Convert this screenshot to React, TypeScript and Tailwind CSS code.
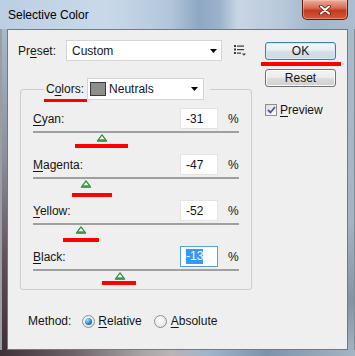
import React from "react";

type Row = { label: string; value: number; focused?: boolean };

const rows: Row[] = [
  { label: "Cyan", value: -31 },
  { label: "Magenta", value: -47 },
  { label: "Yellow", value: -52 },
  { label: "Black", value: -13, focused: true },
];

const TRACK = 201;

// access-key underline, like the Win32 dialog
function Key({ text, at = 0 }: { text: string; at?: number }) {
  return (
    <>
      {text.slice(0, at)}
      <span className="underline underline-offset-[2px]">{text[at]}</span>
      {text.slice(at + 1)}
    </>
  );
}

function Arrow() {
  return (
    <svg width="7" height="4" viewBox="0 0 7 4">
      <path d="M0 0H7L3.5 4Z" fill="#000" />
    </svg>
  );
}

function ListIcon() {
  return (
    <svg width="12" height="11" viewBox="0 0 12 11">
      <g fill="#3a3a3a">
        <rect x="0" y="0" width="2" height="2" />
        <rect x="3" y="0.5" width="7" height="1.2" />
        <rect x="0" y="3.5" width="2" height="2" />
        <rect x="3" y="4" width="7" height="1.2" />
        <rect x="0" y="7" width="2" height="2" />
        <rect x="3" y="7.5" width="4" height="1.2" />
        <path d="M8 8.5H12L10 10.8Z" />
      </g>
    </svg>
  );
}

function Thumb() {
  return (
    <svg width="11" height="8" viewBox="0 0 11 8">
      <path d="M5.5 0.8L10.2 7.2H0.8Z" fill="#f6fbf6" stroke="#2f8a3c" strokeWidth="1.2" strokeLinejoin="round" />
      <rect x="1.6" y="5.2" width="7.8" height="2.3" rx="0.8" fill="#3b9b49" />
    </svg>
  );
}

function Radio({ checked }: { checked?: boolean }) {
  return (
    <span className="flex h-[13px] w-[13px] items-center justify-center rounded-full border border-[#8b8d8f] bg-[radial-gradient(circle_at_40%_35%,#ffffff,#dcdcdc)]">
      {checked && (
        <span className="h-[7px] w-[7px] rounded-full bg-[radial-gradient(circle_at_35%_30%,#a8e4ff,#1b80c8_60%,#0c4a86)]" />
      )}
    </span>
  );
}

function SliderRow({ row }: { row: Row }) {
  const pos = ((row.value + 100) / 200) * TRACK;
  return (
    <div className="flex flex-col">
      <div className="flex h-[21px] items-center">
        <span className="w-[147px]">
          <Key text={row.label} />:
        </span>
        <div
          className={
            row.focused
              ? "flex h-[21px] w-[38px] items-center border border-[#5b9bd8] bg-white pl-[5px]"
              : "flex h-[21px] w-[38px] items-center border border-[#e4e4e4] bg-white pl-[5px]"
          }
        >
          {row.focused ? (
            <span className="bg-[#3399ff] leading-[15px] text-white">{row.value}</span>
          ) : (
            row.value
          )}
        </div>
        <span className="ml-[10px]">%</span>
      </div>
      <div className="mt-[2px] h-[2px] w-full bg-[#9f9f9f]" />
      <div className="relative h-[14px]">
        <div className="absolute top-[1px] -translate-x-1/2" style={{ left: pos }}>
          <Thumb />
        </div>
      </div>
    </div>
  );
}

export default function App() {
  return (
    <div className="relative flex h-[356px] w-[355px] flex-col overflow-hidden font-['Liberation_Sans',Arial,sans-serif] text-[12px] text-[#141414]">
      {/* title bar */}
      <div className="flex h-[29px] shrink-0 items-start justify-between bg-[linear-gradient(90deg,#bccfe2_0%,#c9d9ea_30%,#b2c6db_48%,#8ea7c3_56%,#9cb3cc_62%,#c9d6e4_67%,#b6c8da_80%,#a2b7cd_88%,#aabdd1_100%)]">
        <span className="ml-[8px] mt-[8px] leading-[14px] text-black">Selective Color</span>
        <div className="mr-[7px] flex h-[20px] w-[46px] items-center justify-center rounded-b-[5px] border border-t-0 border-[#5e1e16] bg-[linear-gradient(#eab0a0,#d86a52_42%,#c23a20_55%,#d45a38)] shadow-[inset_0_0_0_1px_rgba(255,200,180,0.45)]">
          <svg width="12" height="10" viewBox="0 0 12 10">
            <path d="M2 1.5L10 8.5M10 1.5L2 8.5" stroke="#6a1a10" strokeWidth="3.6" strokeLinecap="round" />
            <path d="M2 1.5L10 8.5M10 1.5L2 8.5" stroke="#ffffff" strokeWidth="2" strokeLinecap="round" />
          </svg>
        </div>
      </div>

      <div className="flex h-[321px] shrink-0">
        <div className="w-[7px] border-l-[2px] border-[#9b9da2] bg-[linear-gradient(#a7b9cb,#8b909c_40%,#5c4b55_75%,#3e3038)]" />

        {/* client area */}
        <div className="flex w-[341px] border border-[#6b7b8c] bg-[#efefef] pl-[10px] pt-[10px]">
          <div className="flex w-[229px] flex-col">
            <div className="flex h-[21px] items-center">
              <span className="w-[48px]">
                <Key text="Preset" at={2} />:
              </span>
              <div className="flex h-[21px] w-[156px] items-center justify-between border border-[#d4d4d4] bg-white pl-[5px] pr-[4px]">
                <span>Custom</span>
                <Arrow />
              </div>
              <span className="ml-[12px]">
                <ListIcon />
              </span>
            </div>

            <fieldset className="ml-[2px] mt-[17px] w-[227px] rounded-[3px] border border-[#cdcdcd] px-[12px] pb-[4px] pt-[8px]">
              <legend className="ml-[11px] pl-[2px] pr-[6px]">
                <div className="flex items-center">
                  <span className="mr-[3px]">
                    <Key text="Colors" at={1} />:
                  </span>
                  <div className="flex h-[22px] w-[117px] items-center border border-[#d4d4d4] bg-white pl-[2px] pr-[5px]">
                    <span className="h-[14px] w-[16px] border border-[#3a3a3a] bg-[#8e8e8e]" />
                    <span className="ml-[3px] flex-1">Neutrals</span>
                    <Arrow />
                  </div>
                </div>
              </legend>
              <div className="flex flex-col gap-[7px]">
                {rows.map((r) => (
                  <SliderRow key={r.label} row={r} />
                ))}
              </div>
            </fieldset>

            <div className="ml-[10px] mt-[23px] flex h-[16px] items-center">
              <span>Method:</span>
              <span className="ml-[11px]">
                <Radio checked />
              </span>
              <span className="ml-[3px]">
                <Key text="Relative" />
              </span>
              <span className="ml-[12px]">
                <Radio />
              </span>
              <span className="ml-[4px]">
                <Key text="Absolute" />
              </span>
            </div>
          </div>

          <div className="ml-[18px] flex w-[71px] flex-col">
            <div className="mt-[2px] flex h-[18px] items-center justify-center rounded-[3px] border border-[#3c7fb1] bg-[linear-gradient(#f3f7fa,#e6edf2_50%,#d6e0e7_51%,#cfd9e1)] shadow-[inset_0_0_0_1px_#cfeafb]">
              OK
            </div>
            <div className="mt-[9px] flex h-[18px] items-center justify-center rounded-[3px] border border-[#707070] bg-[linear-gradient(#f4f4f4,#ebebeb_50%,#dddddd_51%,#cfcfcf)] shadow-[inset_0_0_0_1px_#fbfbfb]">
              Reset
            </div>
            <div className="mt-[16px] flex h-[14px] items-center">
              <span className="flex h-[12px] w-[12px] items-center justify-center border border-[#8e8f8f] bg-[linear-gradient(135deg,#dcdcdc,#ffffff)]">
                <svg width="9" height="8" viewBox="0 0 9 8">
                  <path d="M1 4L3.5 6.5L8 1" stroke="#44599a" strokeWidth="1.8" fill="none" />
                </svg>
              </span>
              <span className="ml-[3px]">
                <Key text="Preview" />
              </span>
            </div>
          </div>
        </div>

        <div className="w-[7px] border-r border-[#7f8d9b] bg-[linear-gradient(#a9bacb,#a5b3c2_60%,#8494a5_85%,#a3b1c0)]" />
      </div>

      <div className="h-[6px] shrink-0 bg-[linear-gradient(90deg,#3f3138,#6a6066_20%,#a8a4a6_40%,#bab3b5_48%,#a0b6cb_58%,#7d93aa_75%,#a4b4c4)]" />

      {/* red annotation marks */}
      <div className="absolute left-[44px] top-[99px] h-[3px] w-[43px] bg-[#ff0000]" />
      <div className="absolute left-[261px] top-[62px] h-[4px] w-[80px] bg-[#ff0000]" />
      <div className="absolute left-[75px] top-[144px] h-[4px] w-[53px] bg-[#ff0000]" />
      <div className="absolute left-[72px] top-[193px] h-[4px] w-[40px] bg-[#ff0000]" />
      <div className="absolute left-[63px] top-[238px] h-[4px] w-[36px] bg-[#ff0000]" />
      <div className="absolute left-[102px] top-[281px] h-[4px] w-[34px] bg-[#ff0000]" />
    </div>
  );
}
